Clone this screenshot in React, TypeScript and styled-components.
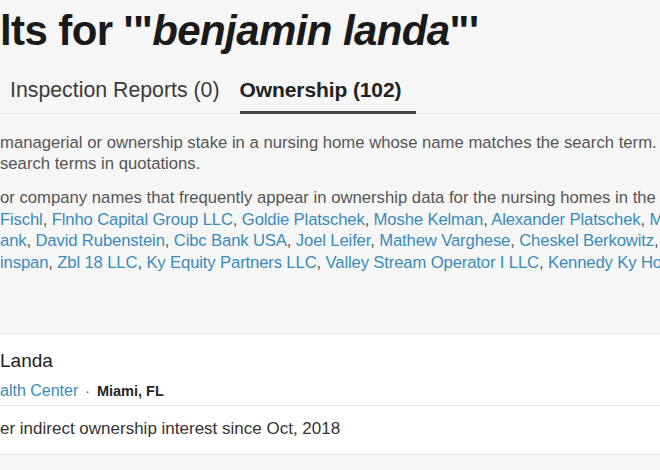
import React from "react";
import styled, { createGlobalStyle } from "styled-components";

const GlobalStyle = createGlobalStyle`
  html, body {
    margin: 0;
    padding: 0;
    background: #f6f6f6;
  }
  body {
    font-family: "Liberation Sans", Arial, sans-serif;
    -webkit-font-smoothing: antialiased;
  }
`;

const Page = styled.div`
  width: 660px;
  height: 470px;
  overflow: hidden;
  background: #f6f6f6;
  color: #555555;
`;

const Title = styled.h1`
  margin: 0;
  padding-top: 7px;
  font-size: 42px;
  line-height: 48px;
  font-weight: 700;
  letter-spacing: -0.6px;
  color: #1a1a1a;
  white-space: nowrap;

  em {
    font-style: italic;
  }
`;

const Tabs = styled.nav`
  display: flex;
  gap: 20px;
  margin-top: 23px;
  padding-left: 10px;
  border-bottom: 1px solid #e2e2e2;
`;

const Tab = styled.a<{ active?: boolean }>`
  display: block;
  padding: 0 ${(p) => (p.active ? "15px" : "0")} 9px 0;
  font-size: ${(p) => (p.active ? "21px" : "21.3px")};
  line-height: 24px;
  font-weight: ${(p) => (p.active ? 700 : 400)};
  letter-spacing: ${(p) => (p.active ? "-0.1px" : "0")};
  color: ${(p) => (p.active ? "#222222" : "#3a3a3a")};
  border-bottom: 3px solid ${(p) => (p.active ? "#474747" : "transparent")};
  margin-bottom: -1px;
  white-space: nowrap;
  cursor: pointer;
`;

const Para = styled.p<{ gap?: number }>`
  margin: ${(p) => p.gap ?? 0}px 0 0;
  font-size: 16.7px;
  line-height: ${(p) => (p.gap && p.gap < 16 ? "21.5px" : "21px")};
  color: #555555;
  white-space: nowrap;
`;

const LinkRow = styled.span`
  letter-spacing: -0.15px;
`;

const Link = styled.a`
  color: #3a8bbd;
  text-decoration: none;
  cursor: pointer;
`;

const Card = styled.section`
  margin-top: 60px;
  background: #ffffff;
  border-top: 1px solid #e3e3e3;
  border-bottom: 1px solid #e3e3e3;
`;

const CardHead = styled.div`
  padding: 15px 0 4px;
  border-bottom: 1px solid #e8e8e8;
`;

const Name = styled.h2`
  margin: 0;
  font-size: 19px;
  line-height: 24px;
  font-weight: 400;
  color: #222222;
`;

const Meta = styled.div`
  margin-top: 8px;
  display: flex;
  align-items: baseline;
  gap: 7px;
  font-size: 16px;
  line-height: 20px;
  white-space: nowrap;
`;

const FacilityLink = styled(Link)`
  font-weight: 500;
`;

const Dot = styled.span`
  color: #555555;
  font-size: 14px;
`;

const Place = styled.span`
  font-size: 14.5px;
  font-weight: 700;
  color: #262626;
`;

const CardBody = styled.div`
  padding: 12px 0 14px;
  font-size: 17px;
  line-height: 22px;
  color: #333333;
  white-space: nowrap;
`;

const names1 = [
  "Fischl",
  "Flnho Capital Group LLC",
  "Goldie Platschek",
  "Moshe Kelman",
  "Alexander Platschek",
  "Mordechai Gutman",
];
const names2 = [
  "ank",
  "David Rubenstein",
  "Cibc Bank USA",
  "Joel Leifer",
  "Mathew Varghese",
  "Cheskel Berkowitz",
  "Leah Landa",
];
const names3 = [
  "inspan",
  "Zbl 18 LLC",
  "Ky Equity Partners LLC",
  "Valley Stream Operator I LLC",
  "Kennedy Ky Holdings LLC",
];

const LinkLine: React.FC<{ names: string[]; lead?: string }> = ({ names, lead }) => (
  <LinkRow>
    {lead}
    {names.map((n, i) => (
      <React.Fragment key={n}>
        <Link>{n}</Link>
        {i < names.length - 1 ? ", " : ","}
      </React.Fragment>
    ))}
  </LinkRow>
);

export default function App() {
  return (
    <Page>
      <GlobalStyle />
      <Title>
        lts for '"<em>benjamin landa</em>"'
      </Title>
      <Tabs>
        <Tab>Inspection Reports (0)</Tab>
        <Tab active>Ownership (102)</Tab>
      </Tabs>
      <Para gap={18}>
        managerial or ownership stake in a nursing home whose name matches the search term.
        <br />
        search terms in quotations.
      </Para>
      <Para gap={13}>
        or company names that frequently appear in ownership data for the nursing homes in the
        results:
        <br />
        <LinkLine names={names1} />
        <br />
        <LinkLine names={names2} />
        <br />
        <LinkLine lead=" " names={names3} />
      </Para>
      <Card>
        <CardHead>
          <Name>Landa</Name>
          <Meta>
            <FacilityLink>alth Center</FacilityLink>
            <Dot>·</Dot>
            <Place>Miami, FL</Place>
          </Meta>
        </CardHead>
        <CardBody>er indirect ownership interest since Oct, 2018</CardBody>
      </Card>
    </Page>
  );
}
